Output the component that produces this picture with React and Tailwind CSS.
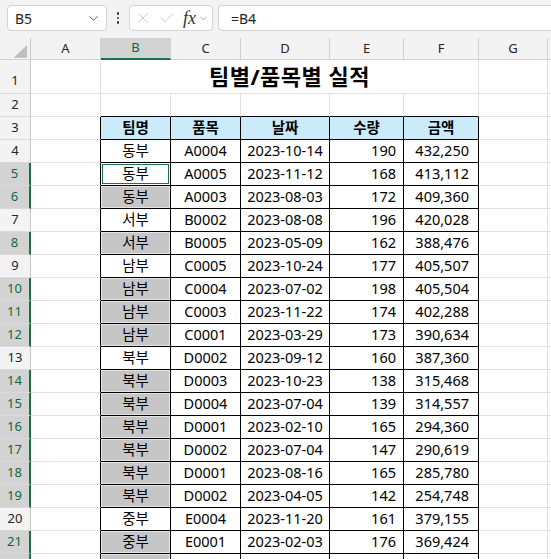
import { ChevronDown, X, Check } from 'lucide-react';

const COLS = [
  { key: 'A', w: 70 },
  { key: 'B', w: 70 },
  { key: 'C', w: 70 },
  { key: 'D', w: 89 },
  { key: 'E', w: 74 },
  { key: 'F', w: 75 },
  { key: 'G', w: 69 },
];

const DATA = [
  ['동부', 'A0004', '2023-10-14', '190', '432,250'],
  ['동부', 'A0005', '2023-11-12', '168', '413,112'],
  ['동부', 'A0003', '2023-08-03', '172', '409,360'],
  ['서부', 'B0002', '2023-08-08', '196', '420,028'],
  ['서부', 'B0005', '2023-05-09', '162', '388,476'],
  ['남부', 'C0005', '2023-10-24', '177', '405,507'],
  ['남부', 'C0004', '2023-07-02', '198', '405,504'],
  ['남부', 'C0003', '2023-11-22', '174', '402,288'],
  ['남부', 'C0001', '2023-03-29', '173', '390,634'],
  ['북부', 'D0002', '2023-09-12', '160', '387,360'],
  ['북부', 'D0003', '2023-10-23', '138', '315,468'],
  ['북부', 'D0004', '2023-07-04', '139', '314,557'],
  ['북부', 'D0001', '2023-02-10', '165', '294,360'],
  ['북부', 'D0002', '2023-07-04', '147', '290,619'],
  ['북부', 'D0001', '2023-08-16', '165', '285,780'],
  ['북부', 'D0002', '2023-04-05', '142', '254,748'],
  ['중부', 'E0004', '2023-11-20', '161', '379,155'],
  ['중부', 'E0001', '2023-02-03', '176', '369,424'],
];

const HEAD = ['팀명', '품목', '날짜', '수량', '금액'];
const SELECTED = [5, 6, 8, 10, 11, 12, 14, 15, 16, 17, 18, 19, 21, 22];
const ACTIVE = 5;
const FONT = { fontFamily: '"Noto Sans", "Noto Sans CJK KR", sans-serif' };

function Toolbar() {
  return (
    <div className="h-[38px] bg-[#f3f3f3] flex items-start pt-[5px] pl-[7px]">
      <div className="w-[100px] h-[26px] bg-white border border-[#d4d4d4] rounded-[4px] flex items-center justify-between pl-[7px] pr-[5px]">
        <span className="text-[14px] text-[#1f1f1f]">B5</span>
        <ChevronDown size={15} strokeWidth={1.5} className="text-[#505050]" />
      </div>
      <div className="w-[22px] h-[26px] flex flex-col items-center justify-center gap-[2px]">
        <span className="w-[2.5px] h-[2.5px] bg-[#333] rounded-full" />
        <span className="w-[2.5px] h-[2.5px] bg-[#333] rounded-full" />
        <span className="w-[2.5px] h-[2.5px] bg-[#333] rounded-full" />
      </div>
      <div className="w-[84px] h-[26px] bg-white border border-[#d4d4d4] rounded-[4px] flex items-center pl-[4px]">
        <X size={18} strokeWidth={1.1} className="text-[#c4c4c4]" />
        <Check size={18} strokeWidth={1.1} className="text-[#c4c4c4] ml-[6px]" />
        <span className="ml-[7px] text-[18px] leading-none italic text-[#333]" style={{ fontFamily: '"Liberation Serif", serif' }}>fx</span>
        <ChevronDown size={11} strokeWidth={1.5} className="text-[#888] ml-[2px]" />
      </div>
      <div className="ml-[5px] flex-1 h-[26px] bg-white border border-r-0 border-[#d4d4d4] rounded-l-[4px] flex items-center pl-[12px]">
        <span className="text-[14px] text-[#1f1f1f]">=B4</span>
      </div>
    </div>
  );
}

function ColumnHeader() {
  return (
    <div className="flex h-[22px] bg-[#f3f3f3]">
      <div className="w-[31px] shrink-0 border-r border-[#c8c8c8] border-b border-b-[#d4d4d4] flex items-end">
        <svg width="31" height="21" viewBox="0 0 31 21">
          <polygon points="28,7 28,20 14,20" fill="#bfbfbf" />
        </svg>
      </div>
      {COLS.map((c) => {
        const sel = c.key === 'B';
        return (
          <div
            key={c.key}
            style={{ width: c.w }}
            className={
              'shrink-0 flex items-center justify-center text-[13px] border-r border-[#d0d0d0] ' +
              (sel
                ? 'bg-[#d3d3d3] text-[#0f6b38] border-b-2 border-b-[#1e7145]'
                : 'text-[#262626] border-b border-b-[#d4d4d4]')
            }
          >
            {c.key}
          </div>
        );
      })}
      <div className="flex-1 border-b border-[#d4d4d4]" />
    </div>
  );
}

function cellValue(r, ci) {
  if (r === 3 && ci >= 1 && ci <= 5) return HEAD[ci - 1];
  if (r >= 4 && ci >= 1 && ci <= 5) {
    const row = DATA[r - 4];
    return row ? row[ci - 1] : '';
  }
  return '';
}

function Row({ r }) {
  const h = r === 1 ? 34 : 23;
  const sel = SELECTED.includes(r);
  const inTable = r >= 3;

  return (
    <div className="flex" style={{ height: h }}>
      <div
        className={
          'w-[31px] shrink-0 flex items-center justify-center text-[13px] border-b border-b-[#dadada] ' +
          (sel
            ? 'bg-[#d3d3d3] text-[#0f6b38] border-r-2 border-r-[#1e7145]'
            : 'bg-[#f3f3f3] text-[#262626] border-r border-r-[#c8c8c8]')
        }
      >
        {r < 22 && <span className={r === 1 ? 'pt-[8px]' : ''}>{r}</span>}
      </div>

      {r === 1 ? (
        <>
          <div className="w-[70px] shrink-0 border-r border-b border-[#e1e1e1]" />
          <div className="w-[378px] shrink-0 border-r border-b border-[#e1e1e1] flex items-center justify-center">
            <span className="text-[22px] font-bold text-black tracking-[0.5px]">팀별/품목별 실적</span>
          </div>
          <div className="w-[69px] shrink-0 border-r border-b border-[#e1e1e1]" />
        </>
      ) : (
        COLS.map((c, ci) => {
          const rightBlack = inTable && ci <= 5;
          const bottomBlack = r >= 2 && ci >= 1 && ci <= 5;
          const val = cellValue(r, ci);
          const gray = ci === 1 && sel && r !== ACTIVE;
          const active = ci === 1 && r === ACTIVE;
          const numeric = r >= 4 && (ci === 4 || ci === 5);
          let bg = 'bg-white';
          if (r === 3 && ci >= 1 && ci <= 5) bg = 'bg-[#ccebfa]';
          if (gray) bg = 'bg-[#c6c6c6] shadow-[inset_0_0_0_1px_#e4e4e4]';
          if (active) bg = 'bg-white shadow-[inset_0_0_0_1px_#ffffff,inset_0_0_0_2px_#1e7145]';
          return (
            <div
              key={c.key}
              style={{ width: c.w }}
              className={
                'shrink-0 flex items-center text-[14.5px] text-black border-r border-b ' +
                (rightBlack ? 'border-r-black ' : 'border-r-[#e1e1e1] ') +
                (bottomBlack ? 'border-b-black ' : 'border-b-[#e1e1e1] ') +
                (numeric ? (ci === 4 ? 'justify-end pr-[7px] ' : 'justify-end pr-[9px] ') : 'justify-center ') +
                (r === 3 ? 'font-bold ' : '') +
                bg
              }
            >
              {val}
            </div>
          );
        })
      )}
      <div className="flex-1 border-b border-[#e1e1e1] bg-white" />
    </div>
  );
}

export default function App() {
  const rows = Array.from({ length: 22 }, (_, i) => i + 1);
  return (
    <div className="w-[551px] h-[559px] overflow-hidden bg-white" style={FONT}>
      <Toolbar />
      <ColumnHeader />
      {rows.map((r) => (
        <Row key={r} r={r} />
      ))}
    </div>
  );
}
